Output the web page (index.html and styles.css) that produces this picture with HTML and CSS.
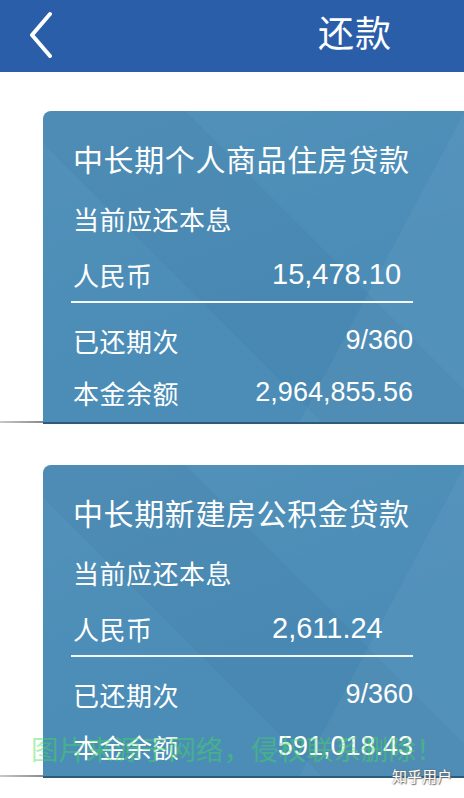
FILE: index.html
```html
<!DOCTYPE html>
<html lang="zh-CN">
<head>
    <meta charset="UTF-8">
    <meta name="viewport" content="width=device-width, initial-scale=1.0">
    <title>还款</title>
    <link rel="stylesheet" href="styles.css">
</head>
<body>
    <div class="header">
        <a class="back" href="#">
            <svg width="30" height="50" viewBox="0 0 30 50">
                <polyline points="24,6 6,27 24,48" fill="none" stroke="#fff" stroke-width="4" stroke-linecap="round" stroke-linejoin="round"/>
            </svg>
        </a>
        <h1>还款</h1>
    </div>

    <div class="list">
        <div class="card-wrap">
            <div class="card">
                <div class="card-title">中长期个人商品住房贷款</div>
                <div class="card-sub">当前应还本息</div>
                <div class="amount-row">
                    <span class="label">人民币</span>
                    <span class="amount">15,478.10</span>
                </div>
                <div class="divider"></div>
                <div class="row">
                    <span class="label">已还期次</span>
                    <span class="value">9/360</span>
                </div>
                <div class="row row-last">
                    <span class="label">本金余额</span>
                    <span class="value">2,964,855.56</span>
                </div>
            </div>
        </div>

        <div class="card-wrap">
            <div class="card">
                <div class="card-title">中长期新建房公积金贷款</div>
                <div class="card-sub">当前应还本息</div>
                <div class="amount-row">
                    <span class="label">人民币</span>
                    <span class="amount">2,611.24</span>
                </div>
                <div class="divider"></div>
                <div class="row">
                    <span class="label">已还期次</span>
                    <span class="value">9/360</span>
                </div>
                <div class="row row-last">
                    <span class="label">本金余额</span>
                    <span class="value">591,018.43</span>
                </div>
            </div>
        </div>
    </div>

    <div class="notice">图片来源于网络，侵权联系删除！</div>
    <div class="credit">知乎用户</div>
</body>
</html>
```

FILE: styles.css
```css
body {
    margin: 0;
    padding: 0;
    width: 464px;
    height: 798px;
    overflow: hidden;
    position: relative;
    background-color: #fff;
    font-family: "Liberation Sans", "Noto Sans CJK SC", sans-serif;
    color: #fff;
}
.header {
    height: 72px;
    background-color: #2b5ea8;
    display: flex;
    align-items: center;
    justify-content: space-between;
    padding: 0 72px 0 26px;
}
.back {
    display: flex;
    margin-top: -6px;
}
.header h1 {
    margin: -10px 0 0 0;
    font-size: 36px;
    font-weight: normal;
    letter-spacing: 1px;
    font-family: "Noto Sans CJK SC", sans-serif;
}
.list {
    padding-top: 39px;
    display: flex;
    flex-direction: column;
    gap: 41px;
}
.card-wrap {
    padding-left: 43px;
    background-image: linear-gradient(to right, #c8c8c8, #8a8a8a);
    background-size: 43px 2px;
    background-position: left bottom 1px;
    background-repeat: no-repeat;
}
.card {
    width: 393px;
    padding: 28px 0 10px 28px;
    border-radius: 8px 0 0 0;
    border-bottom: 2px solid #2e5b7a;
    background-color: #4b8db7;
    background-image:
        linear-gradient(118deg, transparent 72%, rgba(255, 255, 255, 0.04) 72%),
        linear-gradient(45deg, transparent 38%, rgba(20, 60, 100, 0.06) 38%, rgba(20, 60, 100, 0.06) 62%, transparent 62%),
        linear-gradient(160deg, rgba(255, 255, 255, 0.04), transparent 60%);
}
.card-title {
    font-family: "Noto Sans CJK SC", sans-serif;
    font-size: 30px;
    letter-spacing: 0.6px;
    line-height: 38px;
    margin-left: 2px;
}
.card-sub {
    font-family: "Noto Sans CJK SC", sans-serif;
    font-size: 26px;
    letter-spacing: 0.5px;
    line-height: 36px;
    margin: 24px 0 0 2px;
}
.amount-row {
    display: flex;
    align-items: center;
    height: 40px;
    margin-top: 17px;
    padding-left: 2px;
}
.amount-row .label {
    width: 199px;
}
.amount {
    font-size: 29px;
}
.label {
    font-family: "Noto Sans CJK SC", sans-serif;
    font-size: 26px;
    letter-spacing: 0.5px;
}
.divider {
    width: 342px;
    height: 2px;
    margin-top: 7px;
    background-color: #f4f8fb;
}
.row {
    width: 340px;
    height: 40px;
    display: flex;
    align-items: center;
    justify-content: space-between;
    margin-top: 17px;
    padding-left: 2px;
}
.row-last {
    margin-top: 12px;
}
.value {
    font-size: 27px;
}
.notice {
    position: absolute;
    left: 31px;
    top: 731px;
    font-family: "Noto Sans CJK SC", sans-serif;
    font-size: 27.5px;
    line-height: 34px;
    color: rgba(64, 222, 84, 0.45);
    white-space: nowrap;
}
.credit {
    position: absolute;
    right: 12px;
    top: 765px;
    font-family: "Noto Sans CJK SC", sans-serif;
    font-size: 15px;
    color: #fff;
    text-shadow: 0 0 2px #666, 1px 1px 1px #777;
}
```
